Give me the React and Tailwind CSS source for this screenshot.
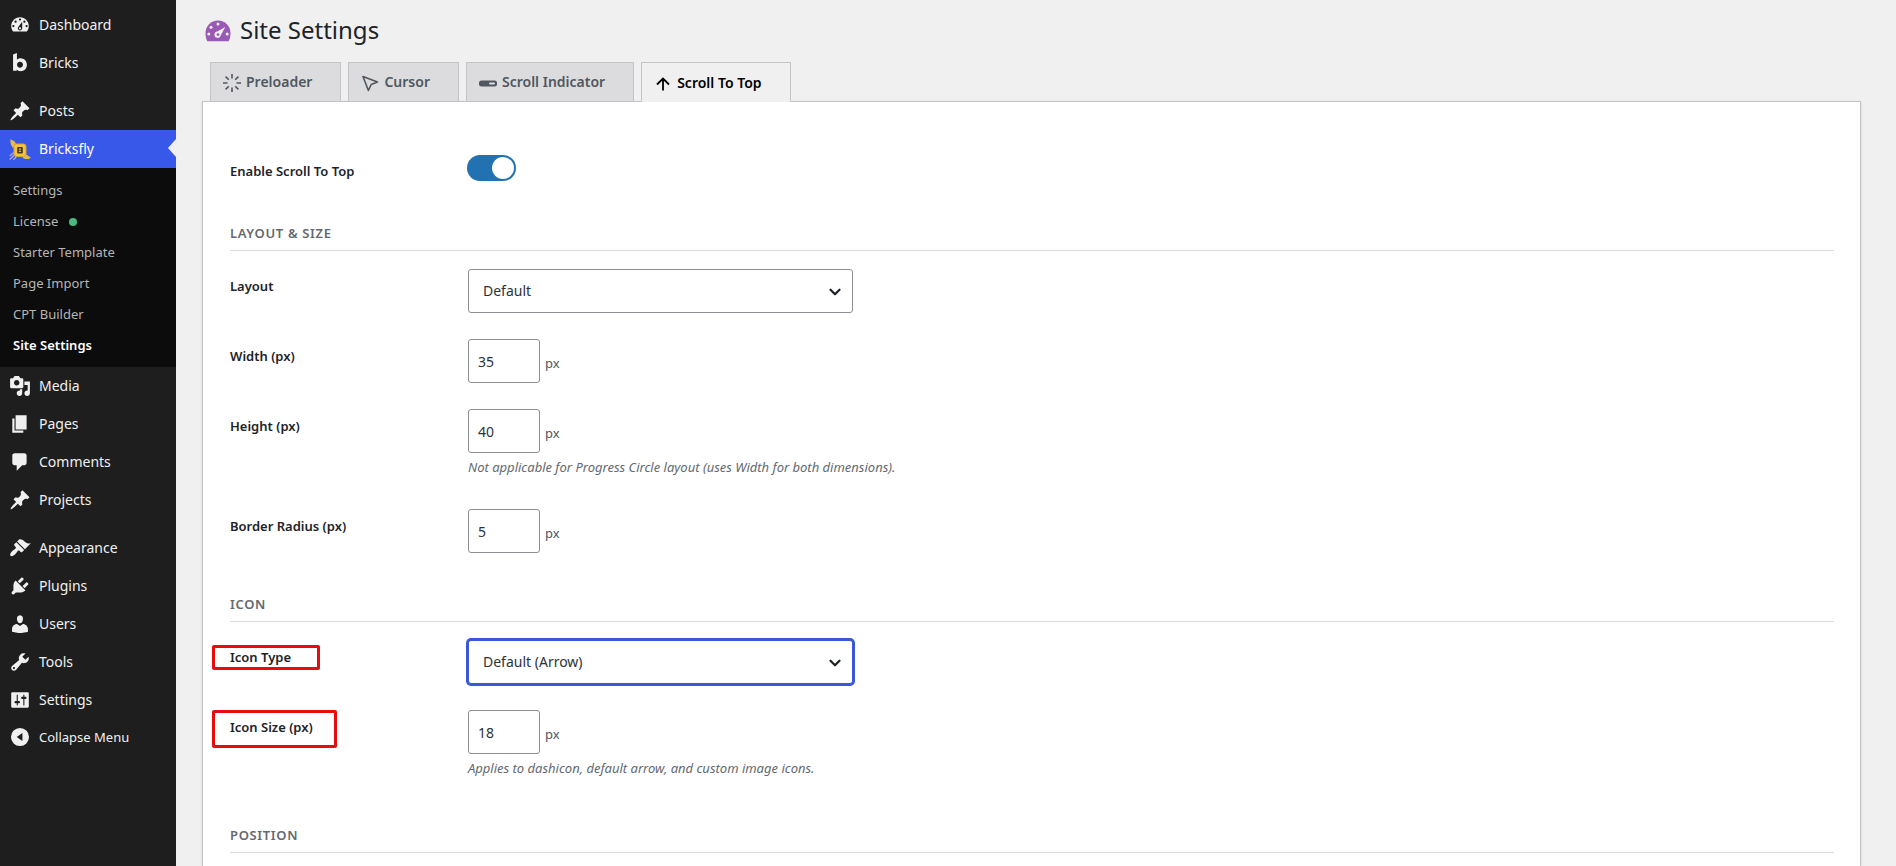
import { useState } from "react";
import { ChevronDown } from "lucide-react";

const PIN =
  "M10.44 3.02l1.82-1.82 6.36 6.35-1.83 1.82c-1.05-.68-2.48-.57-3.41.36l-.75.75c-.92.93-1.04 2.35-.35 3.41l-1.83 1.82-2.41-2.41-2.8 2.79c-.42.42-3.38 2.71-3.8 2.29s1.86-3.39 2.28-3.81l2.79-2.79L4.1 9.36l1.83-1.82c1.05.69 2.48.57 3.4-.36l.75-.75c.93-.92 1.05-2.35.36-3.41z";

const ICONS = {
  dashboard:
    "M3.76 16h12.48c1.1-1.37 1.76-3.11 1.76-5 0-4.42-3.58-8-8-8s-8 3.58-8 8c0 1.89.66 3.63 1.76 5zM10 4c.55 0 1 .45 1 1s-.45 1-1 1-1-.45-1-1 .45-1 1-1zM6 6c.55 0 1 .45 1 1s-.45 1-1 1-1-.45-1-1 .45-1 1-1zm8 0c.55 0 1 .45 1 1s-.45 1-1 1-1-.45-1-1 .45-1 1-1zm-5.37 5.55L12 7v6c0 1.1-.9 2-2 2s-2-.9-2-2c0-.57.24-1.08.63-1.45zM4 10c.55 0 1 .45 1 1s-.45 1-1 1-1-.45-1-1 .45-1 1-1zm12 0c.55 0 1 .45 1 1s-.45 1-1 1-1-.45-1-1 .45-1 1-1zm-5 3c0-.55-.45-1-1-1s-1 .45-1 1 .45 1 1 1 1-.45 1-1z",
  bricks:
    "M3.700 2.200L7.200 1v6c.8-.8 1.900-1.300 3.200-1.300 3.300 0 5.900 2.500 5.900 5.900s-2.600 5.900-5.900 5.900c-1.400 0-2.600-.5-3.400-1.500V17H3.700zM10 8.900c-1.500 0-2.700 1.200-2.700 2.700s1.200 2.700 2.700 2.700 2.700-1.200 2.700-2.700S11.500 8.900 10 8.900z",
  posts: PIN,
  media:
    "M13 11V4c0-.55-.45-1-1-1h-1.67L9 1H5L3.67 3H2c-.55 0-1 .45-1 1v7c0 .55.45 1 1 1h10c.55 0 1-.45 1-1zM7 4.5c1.38 0 2.5 1.12 2.5 2.5S8.38 9.5 7 9.5 4.5 8.38 4.5 7 5.62 4.5 7 4.5zM14 6h5v10.5c0 1.38-1.12 2.5-2.5 2.5S14 17.88 14 16.5s1.12-2.5 2.5-2.5c.17 0 .34.02.5.05V9h-3V6zm-4 8.05V13h2v3.5c0 1.38-1.12 2.5-2.5 2.5S7 17.88 7 16.5 8.12 14 9.5 14c.17 0 .34.02.5.05z",
  pages: "M6 15V2h10v13H6zm-1 1h8v2H3V5h2v11z",
  comments:
    "M5 2h9c1.100 0 2 .9 2 2v7c0 1.100-.9 2-2 2h-2l-5 5v-5H5c-1.100 0-2-.9-2-2V4c0-1.100.9-2 2-2z",
  appearance:
    "M14.48 11.06L7.41 3.99l1.5-1.5c.5-.56 2.3-.47 3.51.32 1.21.8 1.43 1.28 2.91 2.1 1.18.64 2.45 1.26 4.45.85zm-.71.71L6.7 4.7 4.93 6.47c-.39.39-.39 1.02 0 1.41l1.06 1.06c.39.39.39 1.03 0 1.42-.6.6-1.43 1.11-2.21 1.69-.35.26-.7.53-1.01.84C1.43 14.23.4 16.08 1.4 17.07c.99 1 2.84-.03 4.18-1.36.31-.31.58-.66.85-1.02.57-.78 1.08-1.61 1.69-2.21.39-.39 1.02-.39 1.41 0l1.06 1.06c.39.39 1.02.39 1.41 0z",
  plugins:
    "M13.11 4.36L9.87 7.6 8 5.73l3.24-3.24c.35-.34 1.05-.2 1.56.32.52.51.66 1.21.31 1.55zm-8 1.77l.91-1.12 9.01 9.01-1.19.84c-.71.71-2.63 1.16-3.82 1.16H6.14L4.9 17.26c-.59.59-1.54.59-2.12 0-.59-.58-.59-1.53 0-2.12l1.24-1.24v-3.88c0-1.13.4-3.19 1.09-3.89zm7.26 3.97l3.24-3.24c.34-.35 1.04-.21 1.55.31.52.51.66 1.21.31 1.55l-3.24 3.25z",
  users:
    "M10 9.25c-2.27 0-2.73-3.44-2.73-3.44C7 4.02 7.82 2 9.97 2c2.16 0 2.98 2.02 2.71 3.81 0 0-.41 3.44-2.68 3.44zm0 2.57L12.72 10c2.39 0 4.52 2.33 4.52 4.53v2.49s-3.65 1.13-7.24 1.13c-3.65 0-7.24-1.13-7.24-1.13v-2.49c0-2.25 1.94-4.48 4.47-4.48z",
  tools:
    "M16.68 9.77c-1.34 1.34-3.3 1.67-4.95.99l-5.41 6.52c-.99.99-2.59.99-3.58 0s-.99-2.59 0-3.57l6.52-5.42c-.68-1.65-.35-3.61.99-4.95 1.28-1.28 3.12-1.62 4.72-1.06l-2.89 2.89 2.82 2.82 2.86-2.87c.53 1.58.18 3.39-1.08 4.65zM3.81 16.21c.4.39 1.04.39 1.43 0 .4-.4.4-1.04 0-1.43-.39-.4-1.03-.4-1.43 0-.39.39-.39 1.03 0 1.43z",
  settings:
    "M18 16V4c0-.55-.45-1-1-1H3c-.55 0-1 .45-1 1v12c0 .55.45 1 1 1h14c.55 0 1-.45 1-1zM8 11h1c.55 0 1 .45 1 1s-.45 1-1 1H8v1.5c0 .28-.22.5-.5.5s-.5-.22-.5-.5V13H6c-.55 0-1-.45-1-1s.45-1 1-1h1V5.5c0-.28.22-.5.5-.5s.5.22.5.5V11zm5-2h-1c-.55 0-1-.45-1-1s.45-1 1-1h1V5.5c0-.28.22-.5.5-.5s.5.22.5.5V7h1c.55 0 1 .45 1 1s-.45 1-1 1h-1v5.5c0 .28-.22.5-.5.5s-.5-.22-.5-.5V9z",
  collapse:
    "M10 1.800a8.200 8.200 0 1 0 0 16.400 8.200 8.200 0 0 0 0-16.400zM12.200 6.300v7.400L7 10z",
};

function Glyph({ name }) {
  return (
    <svg viewBox="0 0 20 20" className="size-[22px]" fill="currentColor" fillRule="evenodd" aria-hidden="true">
      <path d={ICONS[name]} />
    </svg>
  );
}

function BricksflyLogo() {
  return (
    <svg viewBox="0 0 22 22" className="size-[22px]" aria-hidden="true">
      <path d="M1.500 1.200l4.200 2.300 1.800 3.500-3 3C2.500 8.800 1 5.500 1.500 1.200z" fill="#e9b949" />
      <path d="M15.500 15.500l6.300 4c-2 2.200-5.800 2-8.300 0z" fill="#e9b949" />
      <path d="M.8 18l4-3.500M.6 21.500l6-5.500M4.200 22l3-3" stroke="#b9a6e8" strokeWidth="1.200" />
      <rect x="5" y="6" width="12" height="12.500" rx="2.500" fill="#f2c443" stroke="#dba233" />
      <rect x="8.200" y="9" width="5.600" height="6.600" rx=".8" fill="#4a3a1c" />
      <path d="M9.900 10.500h2v1.300h-2zM9.900 12.800h2v1.300h-2z" fill="#f2c443" />
    </svg>
  );
}

function MenuRow({ icon, label }) {
  return (
    <a href="#" className="flex h-[38px] items-center text-[#f0f0f1]">
      <span className="flex w-[39px] shrink-0 justify-center">
        <Glyph name={icon} />
      </span>
      {label}
    </a>
  );
}

function SubLink({ children, dot }) {
  return (
    <a href="#" className="flex h-[31px] items-center gap-[11px] px-[13px] text-[13px] text-[#b5b5b6]">
      {children}
      {dot && <span className="mt-0.5 size-2 rounded-full bg-[#4ab881]" />}
    </a>
  );
}

function Sidebar() {
  return (
    <nav className="w-44 shrink-0 bg-[#1e1e1e] pt-1.5 text-sm leading-5">
      <MenuRow icon="dashboard" label="Dashboard" />
      <MenuRow icon="bricks" label="Bricks" />
      <div className="h-2.5" />
      <MenuRow icon="posts" label="Posts" />
      <a href="#" className="relative flex h-[38px] items-center bg-[#3858e9] text-white">
        <span className="flex w-[39px] shrink-0 justify-center">
          <BricksflyLogo />
        </span>
        Bricksfly
        <span className="absolute top-[9px] right-0 h-[18px] w-2 bg-[#f0f0f1] [clip-path:polygon(100%_0,0_50%,100%_100%)]" />
      </a>
      <div className="bg-[#0c0c0c] pt-1.5 pb-[7px]">
        <SubLink>Settings</SubLink>
        <SubLink dot>License</SubLink>
        <SubLink>Starter Template</SubLink>
        <SubLink>Page Import</SubLink>
        <SubLink>CPT Builder</SubLink>
        <a href="#" aria-current="page" className="flex h-[31px] items-center px-[13px] text-[13px] font-semibold text-white">
          Site Settings
        </a>
      </div>
      <MenuRow icon="media" label="Media" />
      <MenuRow icon="pages" label="Pages" />
      <MenuRow icon="comments" label="Comments" />
      <MenuRow icon="posts" label="Projects" />
      <div className="h-2.5" />
      <MenuRow icon="appearance" label="Appearance" />
      <MenuRow icon="plugins" label="Plugins" />
      <MenuRow icon="users" label="Users" />
      <MenuRow icon="tools" label="Tools" />
      <MenuRow icon="settings" label="Settings" />
      <button type="button" className="flex h-9 w-full items-center text-[13px] text-[#f0f0f1]">
        <span className="flex w-[39px] shrink-0 justify-center">
          <Glyph name="collapse" />
        </span>
        Collapse Menu
      </button>
    </nav>
  );
}

function GaugeIcon() {
  return (
    <svg viewBox="0 0 26 22" className="h-[22px] w-[26px]" aria-hidden="true">
      <path d="M13 .5C6 .5.5 6 .5 13c0 3 .5 5.800 1.800 8.200h21.400C25 18.800 25.500 16 25.500 13 25.500 6 20 .5 13 .5z" fill="#9b59b6" />
      <g fill="#f0f0f1">
        <circle cx="13" cy="4" r="1.500" />
        <circle cx="6" cy="7.200" r="1.500" />
        <circle cx="3.800" cy="14" r="1.500" />
        <circle cx="22.200" cy="14" r="1.500" />
        <path d="M20.300 7l-4.500 8.300a3.200 3.200 0 1 1-3.500-3.800z" />
      </g>
      <circle cx="13" cy="14.600" r="1.400" fill="#9b59b6" />
    </svg>
  );
}

function PreloaderIcon() {
  return (
    <svg viewBox="0 0 18 18" className="size-[18px]" fill="none" stroke="currentColor" strokeWidth="1.600" aria-hidden="true">
      <path d="M9 0v4.500M9 13.500V18M0 9h4.500M13.500 9H18M2.600 2.600l3.200 3.200M12.200 12.200l3.200 3.200M2.600 15.400l3.200-3.200M12.200 5.800l3.200-3.200" />
    </svg>
  );
}

function CursorIcon() {
  return (
    <svg viewBox="0 0 18 18" className="size-[18px]" fill="none" stroke="currentColor" strokeWidth="1.600" strokeLinejoin="round" aria-hidden="true">
      <path d="M2 2.500l14.500 5.500-6.300 2.500-2.800 6z" />
    </svg>
  );
}

function BarIcon() {
  return (
    <svg viewBox="0 0 18 18" className="size-[18px]" aria-hidden="true">
      <rect x="0" y="6.500" width="18" height="6" rx="2.500" fill="currentColor" />
      <rect x="10" y="8.500" width="6" height="2" rx="1" fill="#dcdcde" />
    </svg>
  );
}

function ArrowUpIcon() {
  return (
    <svg viewBox="0 0 18 18" className="size-[18px]" fill="none" stroke="currentColor" strokeWidth="1.800" aria-hidden="true">
      <path d="M9 15.500V3.500M3 9.500l6-6 6 6" />
    </svg>
  );
}

function Tab({ icon, children, active }) {
  return (
    <button
      type="button"
      role="tab"
      aria-selected={Boolean(active)}
      className={
        active
          ? "-mb-px flex h-10 items-center gap-[5px] border border-b-0 border-[#c3c4c7] bg-[#f0f0f1] pr-7 pl-3 font-semibold text-black"
          : "flex h-[39px] items-center gap-[5px] border border-b-0 border-[#c3c4c7] bg-[#dcdcde] pr-7 pl-3 font-semibold text-[#50575e]"
      }
    >
      <span className="pt-0.5">{icon}</span>
      {children}
    </button>
  );
}

function SectionTitle({ children }) {
  return (
    <h2 className="mt-7 mb-[5px] border-b border-[#dcdcde] pb-[7px] text-[13px] leading-5 font-semibold tracking-wider text-[#646970] uppercase">
      {children}
    </h2>
  );
}

function Row({ id, label, mark, children }) {
  return (
    <div className="grid grid-cols-[238px_1fr]">
      <div className="pt-5 text-[13px] leading-5 font-semibold text-[#1d2327]">
        <span className="relative">
          <label htmlFor={id}>{label}</label>
          {mark && <span className={mark} />}
        </span>
      </div>
      <div className="py-[13px]">{children}</div>
    </div>
  );
}

function SelectBox({ id, options, highlighted }) {
  return (
    <div className="relative max-w-[385px]">
      <select
        id={id}
        className={
          highlighted
            ? "block h-11 w-full appearance-none rounded-[3px] border border-[#3858d9] bg-white pr-10 pl-3.5 text-sm text-[#2c3338] ring-2 ring-[#3858d9] outline-none"
            : "block h-11 w-full appearance-none rounded-[3px] border border-[#8c8f94] bg-white pr-10 pl-3.5 text-sm text-[#2c3338] outline-none"
        }
      >
        {options.map((option) => (
          <option key={option}>{option}</option>
        ))}
      </select>
      <ChevronDown className="pointer-events-none absolute top-3.5 right-[9px] size-[18px] text-[#1d2327]" strokeWidth={3} />
    </div>
  );
}

function PixelInput({ id, value, hint }) {
  const [current, setCurrent] = useState(value);
  return (
    <>
      <div className="flex items-center gap-[5px]">
        <input
          id={id}
          type="text"
          inputMode="numeric"
          value={current}
          onChange={(event) => setCurrent(event.target.value)}
          className="h-11 w-[72px] rounded-[3px] border border-[#8c8f94] bg-white px-[9px] text-sm text-[#2c3338] outline-none"
        />
        <span className="pt-1 text-[13px] leading-5 text-[#50575e]">px</span>
      </div>
      {hint && <p className="mt-[3px] mb-[5px] text-[13px] leading-[22px] text-[#646970] italic">{hint}</p>}
    </>
  );
}

export default function App() {
  const [enabled, setEnabled] = useState(true);
  return (
    <div className="flex min-h-screen bg-[#f0f0f1] font-['Noto_Sans',sans-serif] text-[#3c434a]">
      <Sidebar />
      <main className="flex min-w-0 flex-1 flex-col pr-[35px] pl-[26px]">
        <header className="flex h-[62px] items-center gap-[9px] pl-[3px]">
          <GaugeIcon />
          <h1 className="pb-0.5 text-2xl text-[#1d2327]">Site Settings</h1>
        </header>
        <div role="tablist" className="relative z-10 flex gap-[7px] pl-2 text-sm">
          <Tab icon={<PreloaderIcon />}>Preloader</Tab>
          <Tab icon={<CursorIcon />}>Cursor</Tab>
          <Tab icon={<BarIcon />}>Scroll Indicator</Tab>
          <Tab icon={<ArrowUpIcon />} active>
            Scroll To Top
          </Tab>
        </div>
        <form className="flex-1 border border-b-0 border-[#c3c4c7] bg-white pt-[39px] pr-[26px] pl-[27px] shadow-sm">
          <div className="grid h-[54px] grid-cols-[237px_1fr]">
            <label htmlFor="enable" className="pt-5 text-[13px] leading-5 font-semibold text-[#1d2327]">
              Enable Scroll To Top
            </label>
            <div className="pt-3.5">
              <input
                id="enable"
                type="checkbox"
                role="switch"
                checked={enabled}
                onChange={(event) => setEnabled(event.target.checked)}
                className="block h-[26px] w-[49px] appearance-none rounded-full bg-[#8c8f94] p-0.5 before:block before:size-[22px] before:rounded-full before:bg-white checked:bg-[#2271b1] checked:before:ml-[23px]"
              />
            </div>
          </div>

          <SectionTitle>Layout &amp; Size</SectionTitle>
          <Row id="layout" label="Layout">
            <SelectBox id="layout" options={["Default", "Progress Circle"]} />
          </Row>
          <Row id="width" label="Width (px)">
            <PixelInput id="width" value="35" />
          </Row>
          <Row id="height" label="Height (px)">
            <PixelInput id="height" value="40" hint="Not applicable for Progress Circle layout (uses Width for both dimensions)." />
          </Row>
          <Row id="radius" label="Border Radius (px)">
            <PixelInput id="radius" value="5" />
          </Row>

          <SectionTitle>Icon</SectionTitle>
          <Row
            id="icon-type"
            label="Icon Type"
            mark="pointer-events-none absolute -top-[3px] -left-[18px] h-[25px] w-[108px] rounded-[2px] border-3 border-[#e90c0c]"
          >
            <SelectBox id="icon-type" options={["Default (Arrow)", "Dashicon", "Custom Image"]} highlighted />
          </Row>
          <Row
            id="icon-size"
            label="Icon Size (px)"
            mark="pointer-events-none absolute -top-2 -left-[18px] h-[38px] w-[125px] rounded-[2px] border-3 border-[#e90c0c]"
          >
            <PixelInput id="icon-size" value="18" hint="Applies to dashicon, default arrow, and custom image icons." />
          </Row>

          <SectionTitle>Position</SectionTitle>
        </form>
      </main>
    </div>
  );
}
